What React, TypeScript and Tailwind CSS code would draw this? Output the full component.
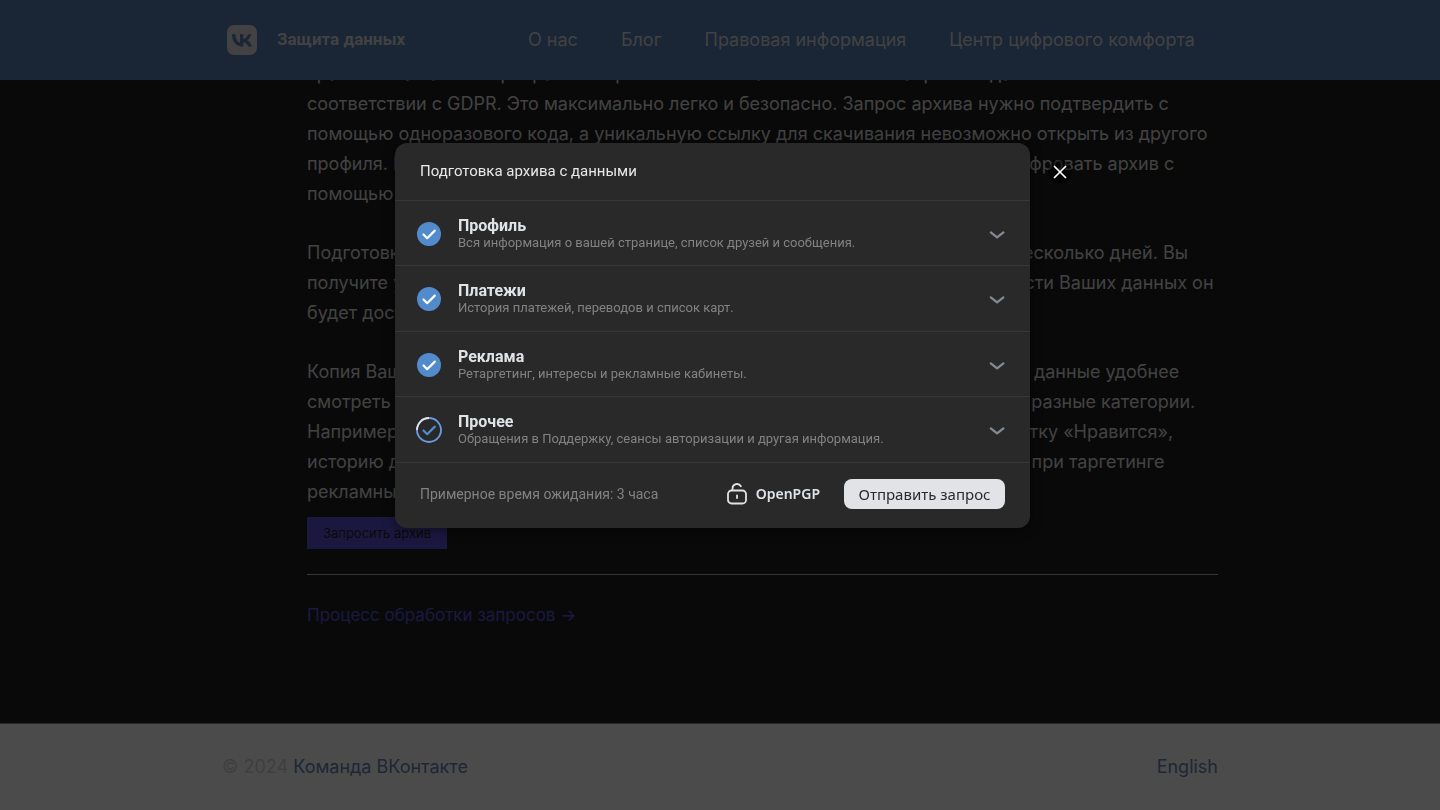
import { Fragment } from "react";

interface Section {
  id: string;
  title: string;
  description: string;
  loading?: boolean;
}

const navLinks = ["О нас", "Блог", "Правовая информация", "Центр цифрового комфорта"];

const paragraphs = [
  [
    "хранится на наших серверах. Теперь Вы можете самостоятельно запросить данные в",
    "соответствии с GDPR. Это максимально легко и безопасно. Запрос архива нужно подтвердить с",
    "помощью одноразового кода, а уникальную ссылку для скачивания невозможно открыть из другого",
    "профиля. Ради дополнительной безопасности предоставлена возможность зашифровать архив с",
    "помощью ключа OpenPGP.",
  ],
  [
    "Подготовка архивов может занять некоторое время — как правило, требуется несколько дней. Вы",
    "получите уведомление, когда архив будет готов для скачивания. Для безопасности Ваших данных он",
    "будет доступен ограниченное время.",
  ],
  [
    "Копия Ваших данных будет оформлена в понятном формате HTML. Загруженные данные удобнее",
    "смотреть в браузере: вся информация в архиве уже аккуратно распределена на разные категории.",
    "Например, Вы сможете увидеть заметки и фотографии, которым поставили отметку «Нравится»,",
    "историю действий в приложении, а также свои интересы, которые применяются при таргетинге",
    "рекламных объявлений.",
  ],
];

const sections: Section[] = [
  { id: "profile", title: "Профиль", description: "Вся информация о вашей странице, список друзей и сообщения." },
  { id: "payments", title: "Платежи", description: "История платежей, переводов и список карт." },
  { id: "ads", title: "Реклама", description: "Ретаргетинг, интересы и рекламные кабинеты." },
  { id: "other", title: "Прочее", description: "Обращения в Поддержку, сеансы авторизации и другая информация.", loading: true },
];

function VkLogo() {
  return (
    <svg viewBox="0 0 30 30" className="h-[30px] w-[30px]" aria-hidden="true">
      <rect width="30" height="30" rx="7" fill="#dcdcdc" />
      <path
        d="M15.9 21.6C9.2 21.6 5.2 17 5 9.2h3.5c.1 5.7 2.6 8.1 4.5 8.6V9.2h3.300v4.900c1.900-.2 4-2.500 4.700-4.900h3.200c-.5 3-2.800 5.200-4.300 6.100 1.600.7 4.100 2.700 5 6.300h-3.500c-.7-2.300-2.600-4.100-5.100-4.400v4.400z"
        fill="#577db3"
      />
    </svg>
  );
}

function Header() {
  return (
    <header className="fixed inset-x-0 top-0 z-10 h-20 bg-[#577db3]">
      <div className="mx-auto flex h-full max-w-[996px] items-center">
        <a href="#" className="ml-[5px] flex w-[301px] items-center gap-5 font-[Roboto,sans-serif] text-[17px] font-bold text-[#dcdcdc]">
          <VkLogo />
          Защита данных
        </a>
        <nav className="flex gap-[43px] whitespace-nowrap text-lg text-[#dcdcdc]">
          {navLinks.map((link) => (
            <a key={link} href="#">{link}</a>
          ))}
        </nav>
      </div>
    </header>
  );
}

function SectionRow({ id, title, description, loading = false }: Section) {
  return (
    <div className="flex h-[65px] items-center border-t border-[#363738] pt-px pr-6 pl-[21px] odd:h-[66px]">
      <span className="relative flex h-[26px] w-[26px] items-center justify-center">
        <input
          id={id}
          type="checkbox"
          defaultChecked
          className={loading ? "h-6 w-6 appearance-none rounded-full" : "h-6 w-6 appearance-none rounded-full bg-[#528bcc]"}
        />
        <svg viewBox="0 0 26 26" fill="none" className="pointer-events-none absolute inset-0" aria-hidden="true">
          {loading && <circle cx="13" cy="13" r="12" stroke="#6a9de0" strokeWidth="1.8" />}
          {loading && <path d="M1 13A12 12 0 0 1 13 1" stroke="#e1e3e6" strokeWidth="1.8" />}
          <path
            d="m7.5 13.5 3.7 3.7 7.6-7.6"
            stroke={loading ? "#528bcc" : "#fff"}
            strokeWidth="2.2"
            strokeLinecap="round"
            strokeLinejoin="round"
          />
        </svg>
      </span>
      <label htmlFor={id} className="ml-4 grow">
        <span className="block text-base leading-[18px] font-bold text-[#e1e3e6]">{title}</span>
        <span className="block text-[13px] leading-4 text-[#828282]">{description}</span>
      </label>
      <button type="button" aria-label={`Развернуть: ${title}`}>
        <svg viewBox="0 0 18 12" fill="none" className="h-3 w-[18px]" aria-hidden="true">
          <path d="m2.8 4.400 6.300 5 6.300-5" stroke="#858993" strokeWidth="2.3" strokeLinecap="round" strokeLinejoin="round" />
        </svg>
      </button>
    </div>
  );
}

function ArchiveDialog() {
  return (
    <div className="fixed inset-0 z-20 flex items-start justify-center bg-black/70 pt-[143px] pr-[15px]">
      <div
        role="dialog"
        aria-labelledby="dialog-title"
        className="relative w-[635px] max-w-full rounded-xl bg-[#292929] font-[Roboto,sans-serif] shadow-[0_2px_12px_rgba(0,0,0,0.5)]"
      >
        <h2 id="dialog-title" className="flex h-[57px] items-center px-[25px] text-[15px] text-[#e9e9e9]">
          Подготовка архива с данными
        </h2>
        {sections.map((section) => (
          <SectionRow key={section.id} {...section} />
        ))}
        {/* Нижняя панель */}
        <div className="flex h-[66px] items-center border-t border-[#363738] px-[25px] pb-[3px]">
          <p className="grow text-sm text-[#828282]">Примерное время ожидания: 3 часа</p>
          <button type="button" className="flex items-center gap-2 text-sm font-semibold text-[#e1e3e6] font-['Noto_Sans',sans-serif]">
            <svg viewBox="0 0 22 24" fill="none" stroke="currentColor" strokeWidth="1.8" strokeLinecap="round" className="h-6 w-[22px]" aria-hidden="true">
              <rect x="2" y="8.5" width="18" height="13" rx="3.5" />
              <path d="M6.5 8.2V6.500a4.500 4.500 0 0 1 8.400-2.200M11 13.500v2.500" />
            </svg>
            OpenPGP
          </button>
          <button type="button" className="ml-6 h-[30px] w-[161px] rounded-lg bg-[#e1e3e6] text-[15px] text-[#2a2a2c] font-['Noto_Sans',sans-serif]">
            Отправить запрос
          </button>
        </div>
        <button
          type="button"
          aria-label="Закрыть"
          className="absolute top-[17px] left-full ml-[18px] flex h-6 w-6 items-center justify-center rounded-full bg-black/50"
        >
          <svg viewBox="0 0 14 14" className="h-[14px] w-[14px]" aria-hidden="true">
            <path d="m1.500 1.500 11 11m0-11-11 11" stroke="#fff" strokeWidth="1.7" strokeLinecap="round" />
          </svg>
        </button>
      </div>
    </div>
  );
}

export default function App() {
  return (
    <div className="flex min-h-screen flex-col bg-[#212121] font-[Inter,sans-serif]">
      <Header />
      <main className="mx-auto w-full max-w-[996px] grow pt-[59px] pl-[85px] text-lg leading-[30px] text-[#dcdcdc]">
        <div className="flex flex-col gap-[29px] whitespace-nowrap">
          {paragraphs.map((lines, i) => (
            <p key={i}>
              {lines.map((line) => (
                <Fragment key={line}>
                  {line}
                  <br />
                </Fragment>
              ))}
            </p>
          ))}
        </div>
        <button type="button" className="mt-[10px] block h-8 w-[140px] bg-[#5b52d8] text-[13px] text-[#212121]">
          Запросить архив
        </button>
        <hr className="mt-[25px] border-[#b4b4b4]" />
        <a href="#" className="mt-[25px] inline-block text-[17px] text-[#5b52d8]">Процесс обработки запросов →</a>
      </main>
      <footer className="h-[87px] border-t border-[#888] bg-[#fcfcfc]">
        <div className="mx-auto flex h-full max-w-[996px] items-center justify-between text-lg text-[#6a7fae]">
          <p>
            <span className="text-[#d2d2d2]">© 2024</span> <a href="#">Команда ВКонтакте</a>
          </p>
          <a href="#">English</a>
        </div>
      </footer>
      <ArchiveDialog />
    </div>
  );
}
